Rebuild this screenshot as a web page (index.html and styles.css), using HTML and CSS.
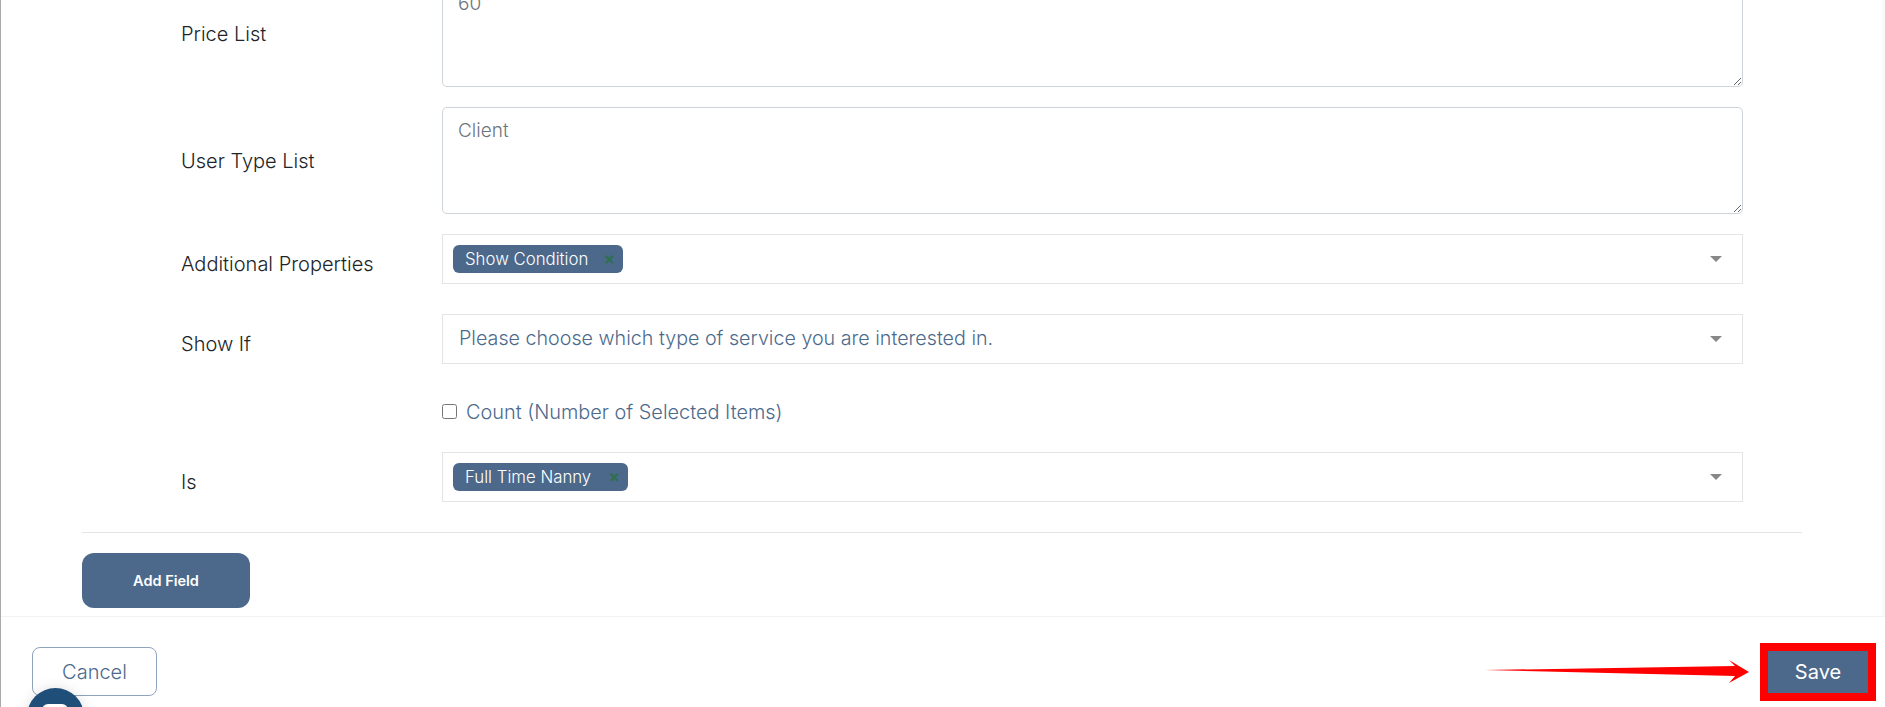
FILE: index.html
```html
<!DOCTYPE html>
<html lang="en">
  <head>
    <meta charset="UTF-8" />
    <meta name="viewport" content="width=device-width, initial-scale=1.0" />
    <title>Edit Field</title>
    <link rel="stylesheet" href="styles.css">
  </head>
  <body>
    <main class="form-panel">
      <div class="row row-first">
        <label>Price List</label>
        <textarea>60</textarea>
      </div>
      <div class="row">
        <label>User Type List</label>
        <textarea placeholder="Client"></textarea>
      </div>
      <div class="row row-select">
        <label>Additional Properties</label>
        <div class="select-box">
          <span class="chip chip-condition">Show Condition <b>×</b></span>
        </div>
      </div>
      <div class="row row-select row-wide-gap">
        <label>Show If</label>
        <div class="select-box">
          <span class="select-value">Please choose which type of service you are interested in.</span>
        </div>
      </div>
      <div class="row row-check">
        <span></span>
        <div class="check-line">
          <input type="checkbox" id="count" />
          <label for="count">Count (Number of Selected Items)</label>
        </div>
      </div>
      <div class="row row-select">
        <label>Is</label>
        <div class="select-box">
          <span class="chip chip-nanny">Full Time Nanny <b>×</b></span>
        </div>
      </div>
      <hr class="divider" />
      <button class="add-field" type="button">Add Field</button>
    </main>
    <footer class="form-footer">
      <button class="cancel-btn" type="button">Cancel</button>
      <button class="save-btn" type="button">Save</button>
    </footer>

    <!-- annotation arrow pointing at Save -->
    <svg class="arrow" width="270" height="26" viewBox="0 0 270 26">
      <polygon points="0,10 250,6 244,0 264,12 244,23 250,16" fill="#ff0000" />
    </svg>

    <div class="chat-bubble">
      <svg width="57" height="57" viewBox="0 0 57 57">
        <rect x="15" y="16" width="26" height="24" rx="6" fill="#fff" />
      </svg>
    </div>
  </body>
</html>
```

FILE: styles.css
```css
* {
  margin: 0;
  padding: 0;
  box-sizing: border-box;
  font-family: "Inter", sans-serif;
}
body {
  display: flex;
  flex-direction: column;
  height: 100vh;
  overflow: hidden;
  background-color: #fff;
  border-left: 1px solid #aaa;
}
.form-panel {
  height: 616px;
  flex-shrink: 0;
  padding-left: 81px;
  padding-right: 80px;
  border-right: 3px solid #fafafa;
  overflow: hidden;
}
.row {
  display: grid;
  grid-template-columns: 261px 1fr;
  align-items: center;
  padding-left: 99px;
  padding-right: 59px;
  margin-bottom: 20px;
}
.row-first {
  margin-top: -20px;
}
.row label {
  font-size: 20px;
  font-weight: 300;
  color: #212529;
}
.row-select label {
  padding-top: 10px;
}
.row-wide-gap {
  margin-top: 30px;
}
.row-check {
  height: 20px;
  margin-top: 36px;
  margin-bottom: 32px;
}
textarea {
  display: block;
  width: 100%;
  height: 107px;
  padding: 11px 15px;
  border: 1px solid #ced4da;
  border-radius: 5px;
  font-size: 19px;
  font-weight: 300;
  color: #6c757d;
  resize: vertical;
  outline: none;
}
textarea::placeholder {
  color: #6c757d;
  opacity: 1;
}
.select-box {
  position: relative;
  display: flex;
  align-items: center;
  height: 50px;
  padding-left: 10px;
  border: 1px solid #e4e4e4;
}
/* dropdown caret */
.select-box::after {
  content: "";
  position: absolute;
  right: 20px;
  top: 21px;
  border-left: 6px solid transparent;
  border-right: 6px solid transparent;
  border-top: 6px solid #888;
}
.select-value {
  padding: 0 0 2px 6px;
  font-size: 19.7px;
  font-weight: 300;
  color: #4c6a8c;
}
.chip {
  display: flex;
  align-items: center;
  justify-content: space-between;
  height: 28px;
  padding: 0 8px 0 12px;
  border-radius: 6px;
  background-color: #4c698b;
  color: #fff;
  font-size: 16.8px;
  font-weight: 300;
}
.chip b {
  color: #2e7050;
  font-size: 17px;
  font-weight: 700;
}
.chip-condition {
  width: 170px;
}
.chip-nanny {
  width: 175px;
}
.check-line {
  display: flex;
  align-items: center;
  gap: 9px;
}
.check-line input {
  width: 15px;
  height: 15px;
  margin-top: -1px;
}
.row .check-line label {
  font-size: 19.9px;
  color: #4c6a8c;
}
.divider {
  margin-top: 30px;
  border: none;
  border-top: 1px solid #e4e4e4;
}
.add-field {
  display: block;
  width: 168px;
  height: 55px;
  margin-top: 20px;
  border: none;
  border-radius: 12px;
  background-color: #4c698b;
  color: #fff;
  font-size: 14.5px;
  font-weight: 600;
}
.form-footer {
  flex: 1;
  display: flex;
  justify-content: space-between;
  align-items: center;
  padding: 30px 17px 11px 30px;
  border-top: 1px solid #f3f3f3;
}
.cancel-btn {
  width: 125px;
  height: 49px;
  margin-left: 1px;
  border: 1px solid #8ea3bc;
  border-radius: 8px;
  background-color: #fff;
  color: #4c6a8c;
  font-size: 20px;
  font-weight: 300;
}
.save-btn {
  width: 100px;
  height: 42px;
  border: none;
  background-color: #4c698b;
  color: #fff;
  font-size: 20px;
  font-weight: 400;
  outline: 8px solid #ff0000;
}
.arrow {
  position: absolute;
  left: 1485px;
  top: 660px;
}
.chat-bubble {
  position: absolute;
  left: 27px;
  top: 688px;
  width: 57px;
  height: 57px;
  border-radius: 50%;
  background-color: #1f4e79;
  box-shadow: 0 0 14px rgba(0, 0, 0, 0.12);
}
```
